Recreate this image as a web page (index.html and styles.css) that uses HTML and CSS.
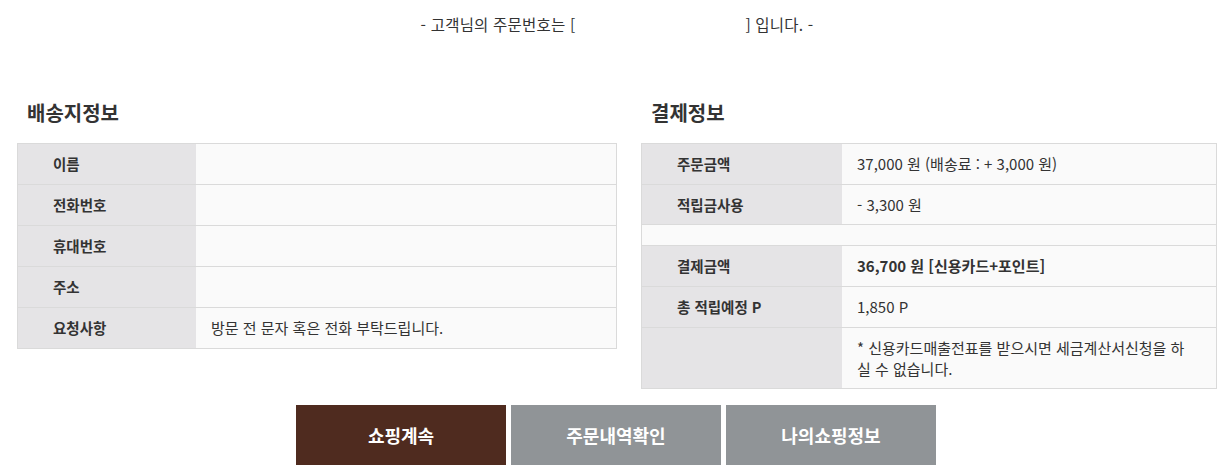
FILE: index.html
```html
<!DOCTYPE html>
<html lang="ko">
<head>
<meta charset="utf-8">
<link rel="stylesheet" href="styles.css">
</head>
<body>
<div class="page">
  <p class="notice">- 고객님의 주문번호는 [<span class="masked"></span>] 입니다. -</p>
  <div class="columns">
    <section class="col col-left">
      <h2 class="section-title">배송지정보</h2>
      <div class="info-table left-table">
        <div class="row"><div class="label">이름</div><div class="value"></div></div>
        <div class="row"><div class="label">전화번호</div><div class="value"></div></div>
        <div class="row"><div class="label">휴대번호</div><div class="value"></div></div>
        <div class="row"><div class="label">주소</div><div class="value"></div></div>
        <div class="row"><div class="label">요청사항</div><div class="value">방문 전 문자 혹은 전화 부탁드립니다.</div></div>
      </div>
    </section>
    <section class="col col-right">
      <h2 class="section-title">결제정보</h2>
      <div class="info-table right-table">
        <div class="row"><div class="label">주문금액</div><div class="value">37,000 원 (배송료 : + 3,000 원)</div></div>
        <div class="row row-short"><div class="label">적립금사용</div><div class="value">- 3,300 원</div></div>
        <div class="spacer"></div>
        <div class="row"><div class="label">결제금액</div><div class="value strong">36,700 원 [신용카드+포인트]</div></div>
        <div class="row"><div class="label">총 적립예정 P</div><div class="value">1,850 P</div></div>
        <div class="row row-tall"><div class="label"></div><div class="value multiline">* 신용카드매출전표를 받으시면 세금계산서신청을 하<br>실 수 없습니다.</div></div>
      </div>
    </section>
  </div>
  <div class="actions">
    <a class="btn btn-primary">쇼핑계속</a>
    <a class="btn btn-secondary">주문내역확인</a>
    <a class="btn btn-secondary">나의쇼핑정보</a>
  </div>
</div>
</body>
</html>
```
FILE: styles.css
```css
* { box-sizing: border-box; }
html, body { margin: 0; padding: 0; background: #fff; }
body {
  font-family: "Noto Sans CJK KR", "Noto Sans", "Liberation Sans", sans-serif;
  color: #333;
  font-size: 14px;
}
.page {
  width: 1200px;
  margin-left: 17px;
}
.notice {
  margin: 0;
  padding-top: 14px;
  height: 34px;
  line-height: 20px;
  font-size: 15.5px;
  letter-spacing: 0.2px;
  text-align: center;
  color: #333;
}
.masked {
  display: inline-block;
  width: 170px;
  height: 14px;
}
.columns {
  display: flex;
  gap: 24px;
  margin-top: 68px;
  align-items: flex-start;
}
.col-left { width: 600px; }
.col-right { width: 576px; }
.section-title {
  margin: 0 0 19px 0;
  padding-left: 10px;
  font-size: 20px;
  line-height: 22px;
  font-weight: 700;
  color: #333;
}
.info-table {
  border: 1px solid #dadada;
  border-bottom: none;
}
.row {
  display: flex;
  height: 41px;
  border-bottom: 1px solid #dadada;
}
.row-short { height: 40px; }
.row-tall { height: 61px; }
.label {
  background: #e5e4e6;
  font-weight: 700;
  font-size: 14.5px;
  padding-left: 35px;
  padding-bottom: 1px;
  display: flex;
  align-items: center;
  color: #333;
}
.left-table .label { width: 178px; }
.right-table .label { width: 200px; }
.value {
  flex: 1;
  background: #fafafa;
  padding-left: 15px;
  padding-bottom: 1px;
  display: flex;
  align-items: center;
  font-size: 15px;
  color: #333;
}
.value.strong { font-weight: 700; }
.value.multiline {
  line-height: 21px;
  align-items: center;
}
.spacer {
  height: 21px;
  background: #fafafa;
  border-bottom: 1px solid #dadada;
}
.actions {
  display: flex;
  justify-content: center;
  gap: 5px;
  margin-top: 16px;
  margin-left: -2px;
}
.btn {
  width: 210px;
  height: 60px;
  display: flex;
  align-items: center;
  justify-content: center;
  color: #fff;
  font-weight: 700;
  font-size: 18px;
  text-decoration: none;
}
.btn-primary { background: #4f2b1f; }
.btn-secondary { background: #909497; }
```
